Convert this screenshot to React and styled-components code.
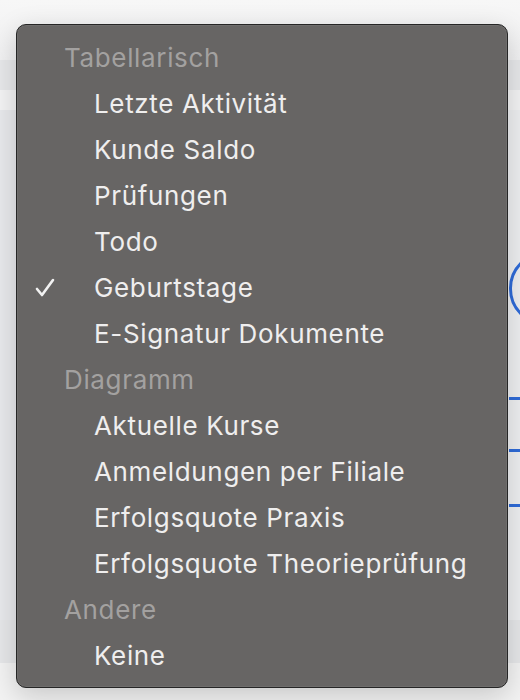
import styled, { createGlobalStyle } from 'styled-components';

const Global = createGlobalStyle`
  html, body {
    margin: 0;
    padding: 0;
    background: #eeeff1;
  }
  body {
    font-family: Inter, "Noto Sans", "Liberation Sans", sans-serif;
    -webkit-font-smoothing: antialiased;
  }
`;

const Page = styled.div`
  position: relative;
  width: 520px;
  height: 700px;
  overflow: hidden;
  display: flex;
  flex-direction: column;
`;

const Band = styled.div`
  height: ${p => p.h}px;
  background: ${p => p.bg};
  flex-shrink: 0;
`;

const Content = styled.div`
  flex: 1;
  background: linear-gradient(to right, #e8e9ec 0, #e8e9ec 500px, #eeeff1 500px);
  display: flex;
  flex-direction: column;
  padding: 142px 0 0 509px;
`;

const OutlineButton = styled.div`
  width: 200px;
  height: 67px;
  border: 3px solid #2f6bd8;
  border-radius: 36px;
  flex-shrink: 0;
`;

const Rule = styled.div`
  height: 3px;
  width: 100%;
  background: #2f6bd8;
  margin-top: ${p => p.mt}px;
  flex-shrink: 0;
`;

const Menu = styled.div`
  position: absolute;
  left: 16px;
  top: 24px;
  width: 492px;
  height: 664px;
  box-sizing: border-box;
  padding: 9px 0 11px;
  background: #676564;
  border: 1px solid #262626;
  border-radius: 10px;
  box-shadow: 0 8px 28px rgba(0, 0, 0, 0.18), inset 0 0 0 1px rgba(255, 255, 255, 0.06);
  display: flex;
  flex-direction: column;
`;

const Row = styled.div`
  height: 46px;
  display: flex;
  align-items: center;
  position: relative;
  padding-left: ${p => (p.header ? 47 : 77)}px;
  font-size: 26px;
  letter-spacing: 0.65px;
  color: ${p => (p.header ? '#a3a1a0' : '#efeeee')};
  white-space: nowrap;
`;

const Check = styled.svg`
  position: absolute;
  left: 18px;
  top: 12px;
  width: 22px;
  height: 22px;
`;

const groups = [
  {
    title: 'Tabellarisch',
    items: ['Letzte Aktivität', 'Kunde Saldo', 'Prüfungen', 'Todo', 'Geburtstage', 'E-Signatur Dokumente'],
  },
  {
    title: 'Diagramm',
    items: ['Aktuelle Kurse', 'Anmeldungen per Filiale', 'Erfolgsquote Praxis', 'Erfolgsquote Theorieprüfung'],
  },
  {
    title: 'Andere',
    items: ['Keine'],
  },
];

const selected = 'Geburtstage';

export default function App() {
  return (
    <>
      <Global />
      <Page>
        <Band h={60} bg="linear-gradient(#f7f7f7, #f1f1f2)" />
        <Band h={30} bg="#e7e8ea" />
        <Band h={20} bg="#f3f3f4" />
        <Content>
          <OutlineButton />
          <Rule mt={72} />
          <Rule mt={49} />
          <Rule mt={52} />
        </Content>
        <Band h={43} bg="#e6e7e9" />
        <Band h={37} bg="#f3f3f3" />

        <Menu>
          {groups.map(g => (
            <div key={g.title}>
              <Row header>{g.title}</Row>
              {g.items.map(item => (
                <Row key={item}>
                  {item === selected && (
                    <Check viewBox="0 0 22 22">
                      <path d="M2 13 L7 19 L18 4" fill="none" stroke="#f2f2f2" strokeWidth="2.6" strokeLinecap="round" strokeLinejoin="round" />
                    </Check>
                  )}
                  {item}
                </Row>
              ))}
            </div>
          ))}
        </Menu>
      </Page>
    </>
  );
}
